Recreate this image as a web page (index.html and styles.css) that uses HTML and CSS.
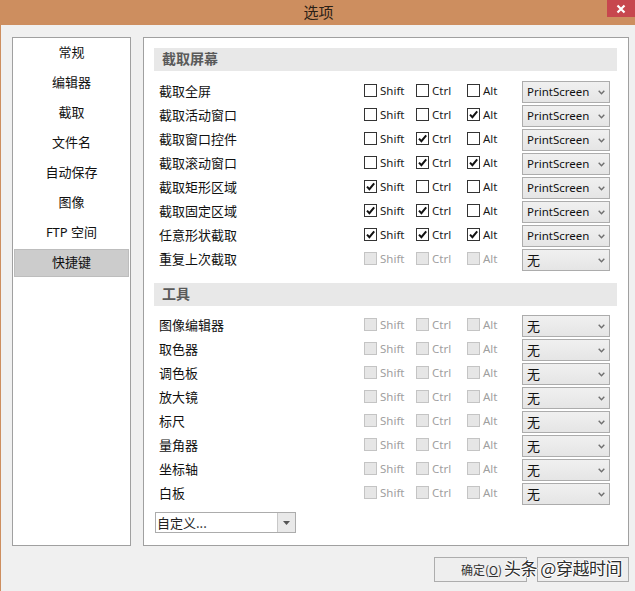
FILE: index.html
```html
<!DOCTYPE html>
<html lang="zh-CN">
<head>
<meta charset="utf-8">
<title>选项</title>
<link rel="stylesheet" href="styles.css">
</head>
<body>
<div class="window">
  <div class="titlebar">
    <span class="title">选项</span>
    <span class="close"><svg viewBox="0 0 10 10" width="10" height="10"><path d="M1.5 1.5 L8.5 8.5 M8.5 1.5 L1.5 8.5" stroke="#fff" stroke-width="2.2" fill="none"/></svg></span>
  </div>
  <div class="content">
    <div class="main">
      <nav class="nav">
        <div class="nav-item">常规</div>
        <div class="nav-item">编辑器</div>
        <div class="nav-item">截取</div>
        <div class="nav-item">文件名</div>
        <div class="nav-item">自动保存</div>
        <div class="nav-item">图像</div>
        <div class="nav-item">FTP 空间</div>
        <div class="nav-item selected">快捷键</div>
      </nav>
      <section class="panel">
        <div class="group-head">截取屏幕</div>
        <div class="rows">
          <div class="row">
            <span class="label">截取全屏</span>
            <span class="check"><span class="box"></span>Shift</span>
            <span class="check"><span class="box"></span>Ctrl</span>
            <span class="check"><span class="box"></span>Alt</span>
            <span class="select"><span class="val">PrintScreen</span><svg class="chev" viewBox="0 0 7 5" width="7" height="5"><path d="M0.7 0.8 L3.5 3.8 L6.3 0.8" stroke="#707070" stroke-width="1.4" fill="none"/></svg></span>
          </div>
          <div class="row">
            <span class="label">截取活动窗口</span>
            <span class="check"><span class="box"></span>Shift</span>
            <span class="check"><span class="box"></span>Ctrl</span>
            <span class="check"><span class="box on"><svg viewBox="0 0 11 11" width="11" height="11"><path d="M2 5.6 L4.4 8.2 L9.2 2.4" stroke="#111" stroke-width="2" fill="none"/></svg></span>Alt</span>
            <span class="select"><span class="val">PrintScreen</span><svg class="chev" viewBox="0 0 7 5" width="7" height="5"><path d="M0.7 0.8 L3.5 3.8 L6.3 0.8" stroke="#707070" stroke-width="1.4" fill="none"/></svg></span>
          </div>
          <div class="row">
            <span class="label">截取窗口控件</span>
            <span class="check"><span class="box"></span>Shift</span>
            <span class="check"><span class="box on"><svg viewBox="0 0 11 11" width="11" height="11"><path d="M2 5.6 L4.4 8.2 L9.2 2.4" stroke="#111" stroke-width="2" fill="none"/></svg></span>Ctrl</span>
            <span class="check"><span class="box"></span>Alt</span>
            <span class="select"><span class="val">PrintScreen</span><svg class="chev" viewBox="0 0 7 5" width="7" height="5"><path d="M0.7 0.8 L3.5 3.8 L6.3 0.8" stroke="#707070" stroke-width="1.4" fill="none"/></svg></span>
          </div>
          <div class="row">
            <span class="label">截取滚动窗口</span>
            <span class="check"><span class="box"></span>Shift</span>
            <span class="check"><span class="box on"><svg viewBox="0 0 11 11" width="11" height="11"><path d="M2 5.6 L4.4 8.2 L9.2 2.4" stroke="#111" stroke-width="2" fill="none"/></svg></span>Ctrl</span>
            <span class="check"><span class="box on"><svg viewBox="0 0 11 11" width="11" height="11"><path d="M2 5.6 L4.4 8.2 L9.2 2.4" stroke="#111" stroke-width="2" fill="none"/></svg></span>Alt</span>
            <span class="select"><span class="val">PrintScreen</span><svg class="chev" viewBox="0 0 7 5" width="7" height="5"><path d="M0.7 0.8 L3.5 3.8 L6.3 0.8" stroke="#707070" stroke-width="1.4" fill="none"/></svg></span>
          </div>
          <div class="row">
            <span class="label">截取矩形区域</span>
            <span class="check"><span class="box on"><svg viewBox="0 0 11 11" width="11" height="11"><path d="M2 5.6 L4.4 8.2 L9.2 2.4" stroke="#111" stroke-width="2" fill="none"/></svg></span>Shift</span>
            <span class="check"><span class="box"></span>Ctrl</span>
            <span class="check"><span class="box"></span>Alt</span>
            <span class="select"><span class="val">PrintScreen</span><svg class="chev" viewBox="0 0 7 5" width="7" height="5"><path d="M0.7 0.8 L3.5 3.8 L6.3 0.8" stroke="#707070" stroke-width="1.4" fill="none"/></svg></span>
          </div>
          <div class="row">
            <span class="label">截取固定区域</span>
            <span class="check"><span class="box on"><svg viewBox="0 0 11 11" width="11" height="11"><path d="M2 5.6 L4.4 8.2 L9.2 2.4" stroke="#111" stroke-width="2" fill="none"/></svg></span>Shift</span>
            <span class="check"><span class="box on"><svg viewBox="0 0 11 11" width="11" height="11"><path d="M2 5.6 L4.4 8.2 L9.2 2.4" stroke="#111" stroke-width="2" fill="none"/></svg></span>Ctrl</span>
            <span class="check"><span class="box"></span>Alt</span>
            <span class="select"><span class="val">PrintScreen</span><svg class="chev" viewBox="0 0 7 5" width="7" height="5"><path d="M0.7 0.8 L3.5 3.8 L6.3 0.8" stroke="#707070" stroke-width="1.4" fill="none"/></svg></span>
          </div>
          <div class="row">
            <span class="label">任意形状截取</span>
            <span class="check"><span class="box on"><svg viewBox="0 0 11 11" width="11" height="11"><path d="M2 5.6 L4.4 8.2 L9.2 2.4" stroke="#111" stroke-width="2" fill="none"/></svg></span>Shift</span>
            <span class="check"><span class="box on"><svg viewBox="0 0 11 11" width="11" height="11"><path d="M2 5.6 L4.4 8.2 L9.2 2.4" stroke="#111" stroke-width="2" fill="none"/></svg></span>Ctrl</span>
            <span class="check"><span class="box on"><svg viewBox="0 0 11 11" width="11" height="11"><path d="M2 5.6 L4.4 8.2 L9.2 2.4" stroke="#111" stroke-width="2" fill="none"/></svg></span>Alt</span>
            <span class="select"><span class="val">PrintScreen</span><svg class="chev" viewBox="0 0 7 5" width="7" height="5"><path d="M0.7 0.8 L3.5 3.8 L6.3 0.8" stroke="#707070" stroke-width="1.4" fill="none"/></svg></span>
          </div>
          <div class="row">
            <span class="label">重复上次截取</span>
            <span class="check disabled"><span class="box"></span>Shift</span>
            <span class="check disabled"><span class="box"></span>Ctrl</span>
            <span class="check disabled"><span class="box"></span>Alt</span>
            <span class="select"><span class="val cjk">无</span><svg class="chev" viewBox="0 0 7 5" width="7" height="5"><path d="M0.7 0.8 L3.5 3.8 L6.3 0.8" stroke="#707070" stroke-width="1.4" fill="none"/></svg></span>
          </div>
        </div>

        <div class="group-head second">工具</div>
        <div class="rows tools">
          <div class="row">
            <span class="label">图像编辑器</span>
            <span class="check disabled"><span class="box"></span>Shift</span>
            <span class="check disabled"><span class="box"></span>Ctrl</span>
            <span class="check disabled"><span class="box"></span>Alt</span>
            <span class="select"><span class="val cjk">无</span><svg class="chev" viewBox="0 0 7 5" width="7" height="5"><path d="M0.7 0.8 L3.5 3.8 L6.3 0.8" stroke="#707070" stroke-width="1.4" fill="none"/></svg></span>
          </div>
          <div class="row">
            <span class="label">取色器</span>
            <span class="check disabled"><span class="box"></span>Shift</span>
            <span class="check disabled"><span class="box"></span>Ctrl</span>
            <span class="check disabled"><span class="box"></span>Alt</span>
            <span class="select"><span class="val cjk">无</span><svg class="chev" viewBox="0 0 7 5" width="7" height="5"><path d="M0.7 0.8 L3.5 3.8 L6.3 0.8" stroke="#707070" stroke-width="1.4" fill="none"/></svg></span>
          </div>
          <div class="row">
            <span class="label">调色板</span>
            <span class="check disabled"><span class="box"></span>Shift</span>
            <span class="check disabled"><span class="box"></span>Ctrl</span>
            <span class="check disabled"><span class="box"></span>Alt</span>
            <span class="select"><span class="val cjk">无</span><svg class="chev" viewBox="0 0 7 5" width="7" height="5"><path d="M0.7 0.8 L3.5 3.8 L6.3 0.8" stroke="#707070" stroke-width="1.4" fill="none"/></svg></span>
          </div>
          <div class="row">
            <span class="label">放大镜</span>
            <span class="check disabled"><span class="box"></span>Shift</span>
            <span class="check disabled"><span class="box"></span>Ctrl</span>
            <span class="check disabled"><span class="box"></span>Alt</span>
            <span class="select"><span class="val cjk">无</span><svg class="chev" viewBox="0 0 7 5" width="7" height="5"><path d="M0.7 0.8 L3.5 3.8 L6.3 0.8" stroke="#707070" stroke-width="1.4" fill="none"/></svg></span>
          </div>
          <div class="row">
            <span class="label">标尺</span>
            <span class="check disabled"><span class="box"></span>Shift</span>
            <span class="check disabled"><span class="box"></span>Ctrl</span>
            <span class="check disabled"><span class="box"></span>Alt</span>
            <span class="select"><span class="val cjk">无</span><svg class="chev" viewBox="0 0 7 5" width="7" height="5"><path d="M0.7 0.8 L3.5 3.8 L6.3 0.8" stroke="#707070" stroke-width="1.4" fill="none"/></svg></span>
          </div>
          <div class="row">
            <span class="label">量角器</span>
            <span class="check disabled"><span class="box"></span>Shift</span>
            <span class="check disabled"><span class="box"></span>Ctrl</span>
            <span class="check disabled"><span class="box"></span>Alt</span>
            <span class="select"><span class="val cjk">无</span><svg class="chev" viewBox="0 0 7 5" width="7" height="5"><path d="M0.7 0.8 L3.5 3.8 L6.3 0.8" stroke="#707070" stroke-width="1.4" fill="none"/></svg></span>
          </div>
          <div class="row">
            <span class="label">坐标轴</span>
            <span class="check disabled"><span class="box"></span>Shift</span>
            <span class="check disabled"><span class="box"></span>Ctrl</span>
            <span class="check disabled"><span class="box"></span>Alt</span>
            <span class="select"><span class="val cjk">无</span><svg class="chev" viewBox="0 0 7 5" width="7" height="5"><path d="M0.7 0.8 L3.5 3.8 L6.3 0.8" stroke="#707070" stroke-width="1.4" fill="none"/></svg></span>
          </div>
          <div class="row">
            <span class="label">白板</span>
            <span class="check disabled"><span class="box"></span>Shift</span>
            <span class="check disabled"><span class="box"></span>Ctrl</span>
            <span class="check disabled"><span class="box"></span>Alt</span>
            <span class="select"><span class="val cjk">无</span><svg class="chev" viewBox="0 0 7 5" width="7" height="5"><path d="M0.7 0.8 L3.5 3.8 L6.3 0.8" stroke="#707070" stroke-width="1.4" fill="none"/></svg></span>
          </div>
        </div>

        <div class="combo">
          <span class="combo-text">自定义...</span>
          <span class="combo-btn"><svg viewBox="0 0 7 4" width="7" height="4"><path d="M0 0 L7 0 L3.5 4 Z" fill="#555"/></svg></span>
        </div>
      </section>
    </div>
    <div class="buttons">
      <span class="btn">确定(<u>O</u>)</span>
      <span class="btn"></span>
    </div>
  </div>
  <div class="watermark">头条 @穿越时间</div>
</div>
</body>
</html>
```

FILE: styles.css
```css
* { box-sizing: border-box; }

html, body {
  margin: 0;
  padding: 0;
  width: 635px;
  height: 591px;
  overflow: hidden;
  background: #f0f0f0;
}

.window {
  position: relative;
  width: 635px;
  height: 591px;
  border-left: 1px solid #cd8e5f;
  background: #f0f0f0;
  font-family: "Noto Sans CJK SC", "Noto Sans", sans-serif;
  color: #000;
}

.titlebar {
  position: relative;
  height: 25px;
  background: #cd8e5f;
  display: flex;
  align-items: center;
  justify-content: center;
}

.title {
  font-size: 15px;
  color: #2b2016;
  line-height: 25px;
  margin-left: 1px;
  padding-bottom: 2px;
}

.close {
  position: absolute;
  right: 0;
  top: 0;
  width: 28px;
  height: 17px;
  background: #c7474e;
  display: flex;
  align-items: center;
  justify-content: center;
}

.content {
  padding: 12px 6px 0 11px;
}

.main {
  display: flex;
  gap: 12px;
  height: 509px;
}

.nav {
  width: 119px;
  background: #fff;
  border: 1px solid #a0a0a0;
  padding: 0 1px;
  display: flex;
  flex-direction: column;
}

.nav-item {
  height: 30px;
  display: flex;
  align-items: center;
  justify-content: center;
  font-family: "Noto Sans", "Noto Sans CJK SC", sans-serif;
  font-size: 13px;
  color: #111;
  padding-bottom: 3px;
}

.nav-item.selected {
  margin: 1px 0;
  height: 28px;
  background: #cccccc;
  border: 1px solid #bdbdbd;
}

.panel {
  width: 486px;
  background: #fff;
  border: 1px solid #a0a0a0;
  padding: 10px 11px 0 10px;
  display: flex;
  flex-direction: column;
}

.group-head {
  height: 23px;
  background: #e8e8e8;
  padding-left: 8px;
  font-size: 14px;
  font-weight: bold;
  color: #5a5a5a;
  line-height: 21px;
}

.group-head.second {
  margin-top: 12px;
}

.rows {
  margin-top: 8px;
  padding-left: 5px;
  display: flex;
  flex-direction: column;
}

.rows.tools {
  margin-top: 7px;
}

.row {
  height: 24px;
  display: grid;
  grid-template-columns: 205px 52px 51px 55px 88px;
  align-items: center;
}

.label {
  font-size: 13px;
  line-height: 16px;
  color: #111;
  margin-top: -1px;
}

.check {
  display: flex;
  align-items: center;
  gap: 3px;
  font-family: "Noto Sans", sans-serif;
  font-size: 11.5px;
  line-height: 16px;
  color: #1a1a1a;
  margin-top: -1px;
}

.box {
  width: 13px;
  height: 13px;
  border: 1px solid #333;
  background: #fff;
  display: flex;
  align-items: center;
  justify-content: center;
  flex: none;
}

.check.disabled {
  color: #a0a0a0;
}

.check.disabled .box {
  border-color: #c4c4c4;
  background: #e6e6e6;
}

.select {
  height: 22px;
  margin-top: 2px;
  border: 1px solid #acacac;
  background: linear-gradient(#f0f0f0, #e5e5e5);
  display: flex;
  align-items: center;
  justify-content: space-between;
  padding: 0 4px 0 4px;
}

.val {
  font-family: "Noto Sans", sans-serif;
  font-size: 11.5px;
  line-height: 16px;
  color: #111;
}

.val.cjk {
  font-family: "Noto Sans CJK SC", sans-serif;
  font-size: 13px;
}

.chev {
  display: block;
  flex: none;
}

.combo {
  margin-top: 7px;
  margin-left: 1px;
  width: 141px;
  height: 21px;
  border: 1px solid #acacac;
  background: #fff;
  display: flex;
}

.combo-text {
  flex: 1;
  font-size: 13px;
  line-height: 19px;
  padding-left: 1px;
  color: #222;
}

.combo-btn {
  width: 18px;
  border-left: 1px solid #c8c8c8;
  background: #e9e9e9;
  display: flex;
  align-items: center;
  justify-content: center;
}

.buttons {
  margin-top: 11px;
  display: flex;
  justify-content: flex-end;
  gap: 10px;
}

.btn {
  width: 93px;
  height: 25px;
  border: 1px solid #adadad;
  background: #eeeeee;
  display: flex;
  align-items: center;
  justify-content: center;
  font-size: 12px;
  color: #333;
  padding-left: 2px;
}

.btn:last-child {
  width: 92px;
}

.watermark {
  position: absolute;
  left: 503px;
  top: 557px;
  font-size: 17px;
  line-height: 22px;
  color: #2e2e2e;
  letter-spacing: -0.5px;
  text-shadow: 1px 0 0 #fff, -1px 0 0 #fff, 0 1px 0 #fff, 0 -1px 0 #fff;
}
```
